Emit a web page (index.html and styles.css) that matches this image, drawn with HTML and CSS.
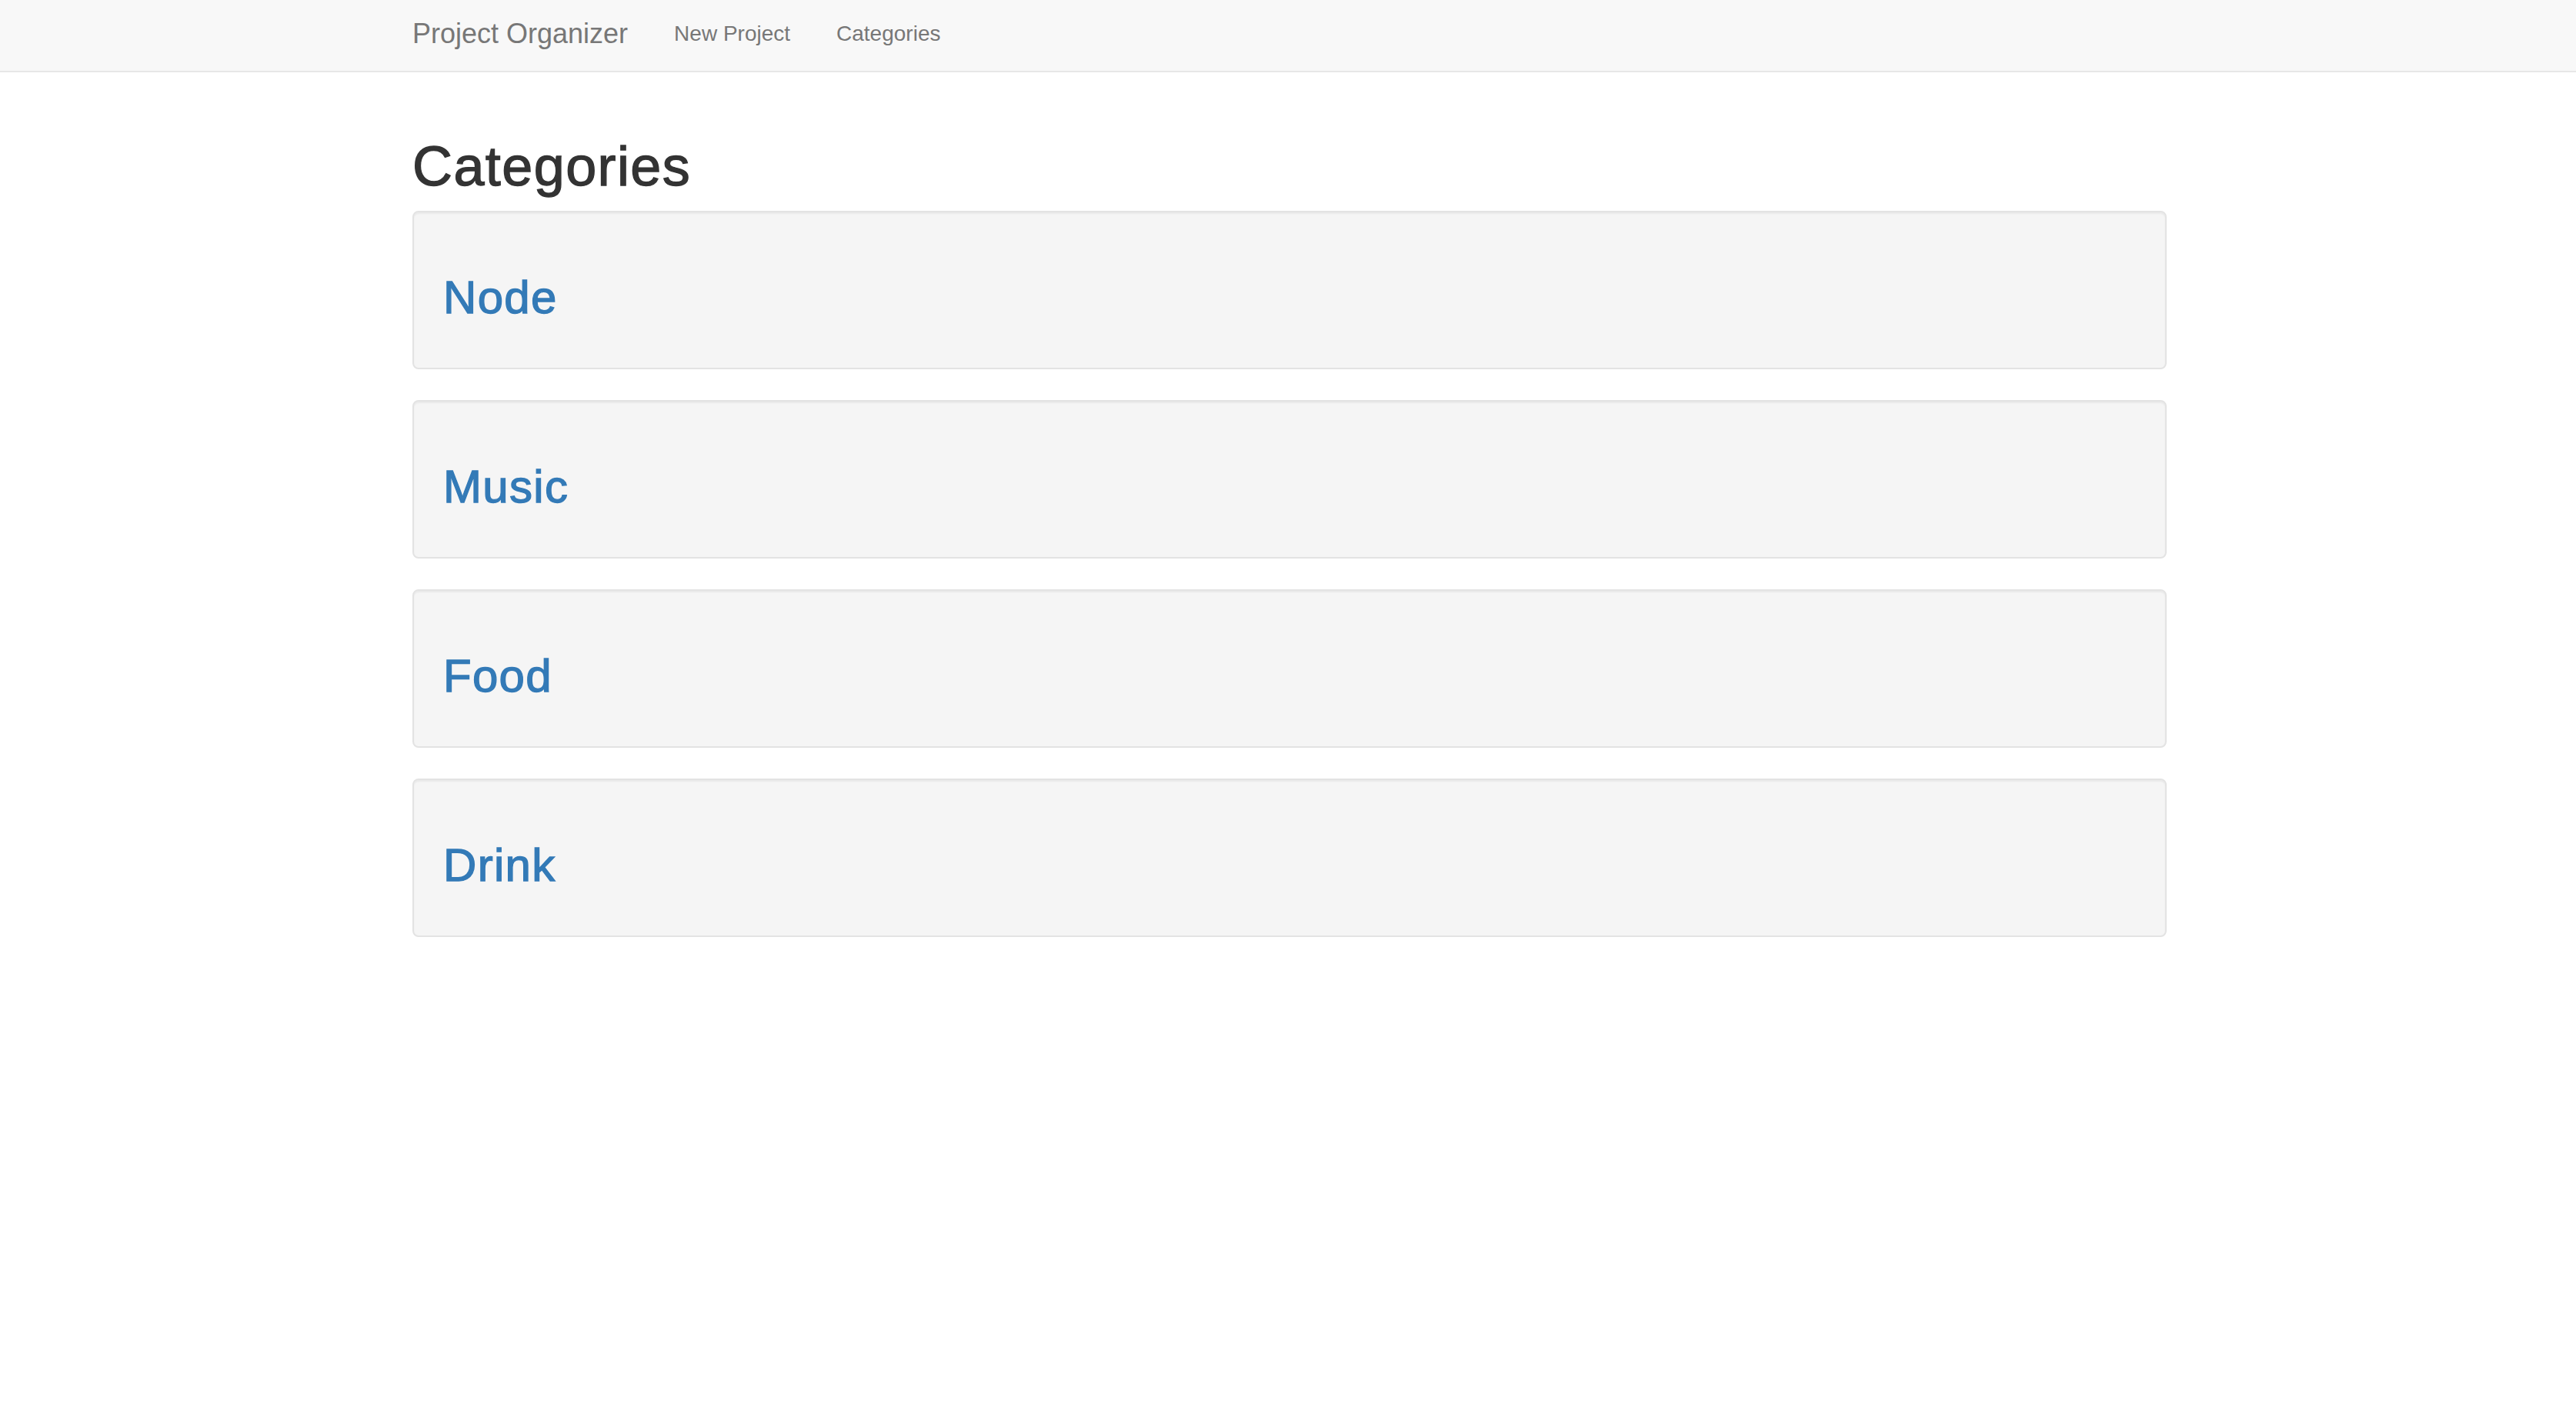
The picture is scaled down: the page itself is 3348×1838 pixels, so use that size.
FILE: index.html
```html
<!DOCTYPE html>
<html lang="en">
<head>
<meta charset="utf-8">
<title>Project Organizer</title>
<link rel="stylesheet" href="styles.css">
</head>
<body>
<nav class="navbar">
  <div class="container navbar-inner">
    <a class="brand" href="#">Project Organizer</a>
    <ul class="nav-links">
      <li><a href="#">New Project</a></li>
      <li><a href="#">Categories</a></li>
    </ul>
  </div>
</nav>
<main class="container main">
  <h1 class="page-title">Categories</h1>
  <div class="well"><h2><a href="#">Node</a></h2></div>
  <div class="well"><h2><a href="#">Music</a></h2></div>
  <div class="well"><h2><a href="#">Food</a></h2></div>
  <div class="well"><h2><a href="#">Drink</a></h2></div>
</main>
</body>
</html>
```
FILE: styles.css
```css
* { box-sizing: border-box; }
html, body {
  margin: 0;
  padding: 0;
  background: #fff;
  font-family: "Liberation Sans", Arial, sans-serif;
  color: #333;
}
a { text-decoration: none; }
.container {
  width: 2284px;
  padding-left: 4px;
  margin: 0 auto;
}
.navbar {
  background: #f8f8f8;
  border-bottom: 2px solid #e7e7e7;
  padding-bottom: 4px;
}
.navbar-inner {
  display: flex;
  align-items: center;
  height: 88px;
}
.brand {
  font-size: 36px;
  color: #777;
  padding-right: 30px;
  line-height: 40px;
}
.nav-links {
  display: flex;
  list-style: none;
  margin: 0;
  padding: 0;
}
.nav-links a {
  display: block;
  font-size: 28px;
  line-height: 40px;
  color: #777;
  padding: 0 30px;
}
.main {
  padding-top: 83px;
}
.page-title {
  font-size: 72px;
  line-height: 1.1;
  font-weight: 500;
  letter-spacing: 1.4px;
  -webkit-text-stroke: 1.3px #333;
  margin: 0 0 18px;
  color: #333;
}
.well {
  background: #f5f5f5;
  border: 2px solid #e3e3e3;
  border-radius: 8px;
  box-shadow: inset 0 2px 2px rgba(0,0,0,0.05);
  padding: 38px 38px;
  margin-bottom: 40px;
}
.well h2 {
  font-size: 60px;
  line-height: 1.1;
  font-weight: 500;
  letter-spacing: 1.3px;
  margin: 40px 0 20px;
}
.well h2 a {
  color: #337ab7;
  -webkit-text-stroke: 1.3px #337ab7;
}
```
